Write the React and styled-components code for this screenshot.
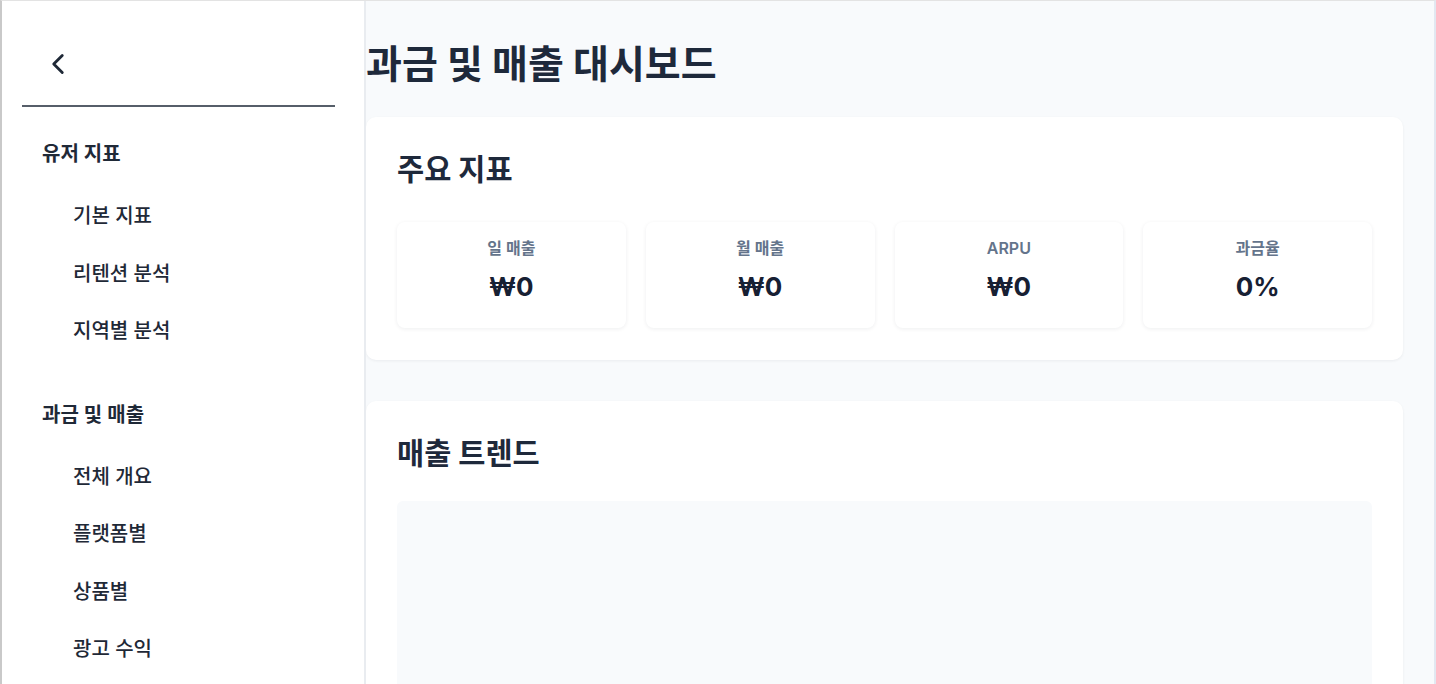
import React from "react";
import styled, { createGlobalStyle } from "styled-components";

const Global = createGlobalStyle`
  html, body { margin: 0; padding: 0; height: 100%; overflow: hidden; }
  body {
    font-family: Inter, "Noto Sans CJK KR", "Noto Sans", sans-serif;
    color: #1e293b;
    background: #ffffff;
  }
  * { box-sizing: border-box; }
`;

const Frame = styled.div`
  display: flex;
  height: 100vh;
  border-left: 2px solid #c9c9c9;
  border-top: 1px solid #e3e3e3;
  border-right: 2px solid #e2e8f1;
  overflow: hidden;
`;

const Sidebar = styled.aside`
  width: 364px;
  flex-shrink: 0;
  background: #ffffff;
  border-right: 2px solid #e9ecf0;
  padding: 0 29px 0 20px;
  display: flex;
  flex-direction: column;
`;

const SideHeader = styled.div`
  height: 106px;
  display: flex;
  align-items: center;
  padding-left: 19px;
  padding-top: 22px;
  border-bottom: 2px solid #565e69;
`;

const BackButton = styled.button`
  border: none;
  background: none;
  padding: 0;
  width: 34px;
  height: 34px;
  display: flex;
  color: #1f2937;
  cursor: pointer;
`;

const Nav = styled.nav`
  display: flex;
  flex-direction: column;
  padding: 16px 0 0 20px;
`;

const Group = styled.div`
  display: flex;
  flex-direction: column;
  & + & { margin-top: 23px; }
`;

const GroupTitle = styled.div`
  font-size: 20px;
  font-weight: 600;
  line-height: 30px;
  padding: 16px 0;
  margin-bottom: 3px;
  color: #1f2937;
`;

const NavItem = styled.a`
  font-size: 20px;
  font-weight: 500;
  line-height: 29.5px;
  padding: 14px 0 14px 31px;
  color: #1f2937;
  text-decoration: none;
  cursor: pointer;
`;

const Main = styled.main`
  flex: 1;
  background: #f8fafc;
  padding: 0 31px 0 0;
  overflow: hidden;
  display: flex;
  flex-direction: column;
`;

const PageTitle = styled.h1`
  margin: 40px 0 30px;
  font-size: 39px;
  line-height: 46px;
  font-weight: 700;
  color: #1e293b;
`;

const Card = styled.section`
  background: #ffffff;
  border-radius: 10px;
  box-shadow: 0 1px 3px rgba(15, 23, 42, 0.06);
  padding: 32px 31px;
  & + & { margin-top: 41px; }
`;

const CardTitle = styled.h2`
  margin: 0 0 ${(p) => p.$gap}px;
  font-size: 29.5px;
  line-height: 40px;
  font-weight: 700;
  color: #1e293b;
`;

const StatGrid = styled.div`
  display: grid;
  grid-template-columns: repeat(4, 1fr);
  gap: 20px;
`;

const StatBox = styled.div`
  background: #ffffff;
  border-radius: 8px;
  box-shadow: 0 1px 4px rgba(15, 23, 42, 0.07);
  padding: 14px 12px 22px;
  display: flex;
  flex-direction: column;
  align-items: center;
  gap: 8px;
`;

const StatLabel = styled.div`
  font-size: 16px;
  line-height: 24px;
  font-weight: 600;
  color: #64748b;
`;

const StatValue = styled.div`
  font-size: 26px;
  line-height: 38px;
  font-weight: 700;
  color: #172033;
`;

const ChartArea = styled.div`
  height: 320px;
  background: #f8fafc;
  border-radius: 6px;
`;

const groups = [
  { title: "유저 지표", items: ["기본 지표", "리텐션 분석", "지역별 분석"] },
  { title: "과금 및 매출", items: ["전체 개요", "플랫폼별", "상품별", "광고 수익"] },
];

const stats = [
  { label: "일 매출", value: "₩0" },
  { label: "월 매출", value: "₩0" },
  { label: "ARPU", value: "₩0" },
  { label: "과금율", value: "0%" },
];

export default function App() {
  return (
    <>
      <Global />
      <Frame>
        <Sidebar>
          <SideHeader>
            <BackButton aria-label="back">
              <svg width="34" height="34" viewBox="0 0 24 24" fill="none" stroke="currentColor" strokeWidth="2" strokeLinecap="round" strokeLinejoin="round">
                <path d="m15 18-6-6 6-6" />
              </svg>
            </BackButton>
          </SideHeader>
          <Nav>
            {groups.map((g) => (
              <Group key={g.title}>
                <GroupTitle>{g.title}</GroupTitle>
                {g.items.map((it) => (
                  <NavItem key={it}>{it}</NavItem>
                ))}
              </Group>
            ))}
          </Nav>
        </Sidebar>
        <Main>
          <PageTitle>과금 및 매출 대시보드</PageTitle>
          <Card>
            <CardTitle $gap={33}>주요 지표</CardTitle>
            <StatGrid>
              {stats.map((s) => (
                <StatBox key={s.label}>
                  <StatLabel>{s.label}</StatLabel>
                  <StatValue>{s.value}</StatValue>
                </StatBox>
              ))}
            </StatGrid>
          </Card>
          <Card>
            <CardTitle $gap={28}>매출 트렌드</CardTitle>
            <ChartArea />
          </Card>
        </Main>
      </Frame>
    </>
  );
}
